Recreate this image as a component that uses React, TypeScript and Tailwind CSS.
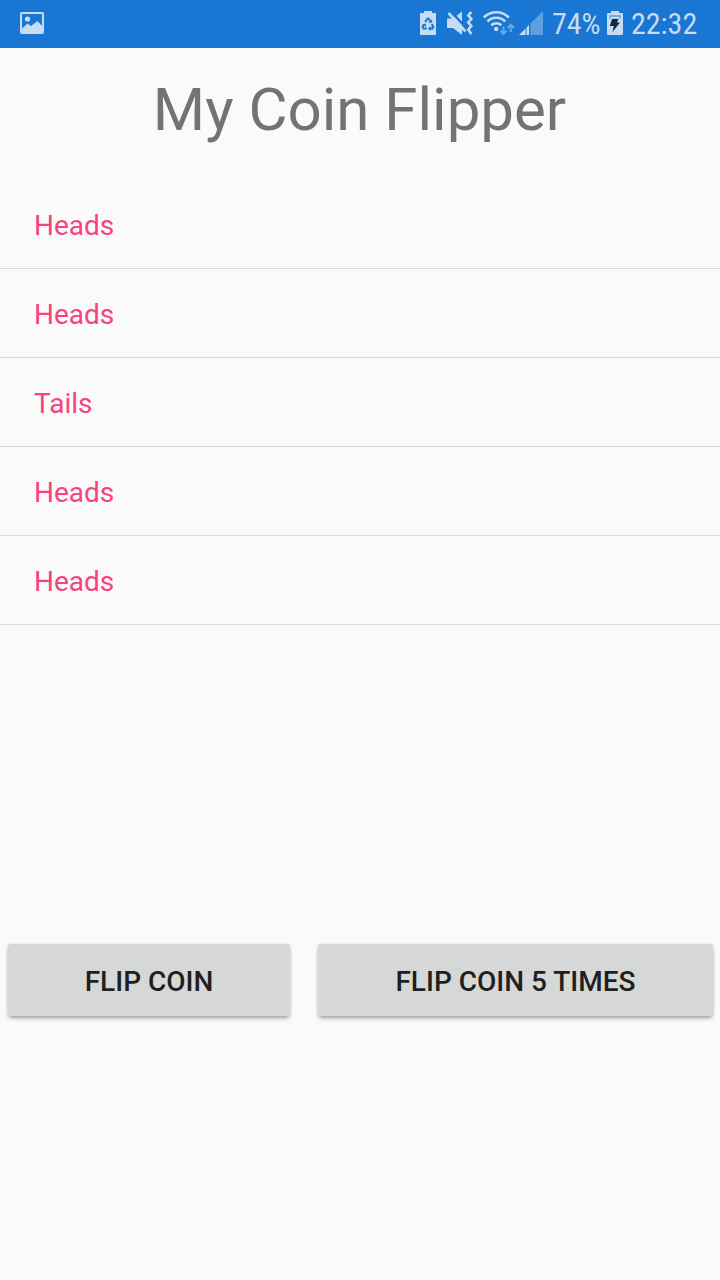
const flips = ["Heads", "Heads", "Tails", "Heads", "Heads"];

function PictureIcon() {
  return (
    <svg className="h-12 w-6" viewBox="20 0 24 48">
      <rect x="21" y="13" width="22" height="20" rx="1" fill="none" stroke="#c5dcf3" strokeWidth="2" />
      <circle cx="27.500" cy="19" r="2.600" fill="#c5dcf3" />
      <path d="M22 28.500l5.500-5 3.500 2.500 6.500-5 4.500 5V33H22z" fill="#c5dcf3" />
    </svg>
  );
}

function RecycleBatteryIcon() {
  return (
    <svg className="h-12 w-4" viewBox="420 0 16 48">
      <path d="M421 13h3v-2h8v2h3q1 0 1 1v20q0 1-1 1h-14q-1 0-1-1v-20q0-1 1-1z" fill="#c5dcf3" />
      <g fill="none" stroke="#1976d2" strokeWidth="2">
        <path d="M425.200 22l2-3.200h1.600l1.500 2.600" />
        <path d="M431.800 24l1.600 2.900-.8 1.500h-2.700" />
        <path d="M426.800 28.400h-3.400l-.8-1.500 1.600-2.700" />
      </g>
      <path d="M428.500 22.400l3.500.3.200-3.300zM430.500 25.900v5l-2.500-2.500zM422.200 24.400l3.300-.9.900 3.200z" fill="#1976d2" />
    </svg>
  );
}

function VibrateMuteIcon() {
  return (
    <svg className="ml-2.5 h-12 w-[27px]" viewBox="446 0 27 48">
      <path d="M447 19.500q0-1 1-1h5l9-7V35l-9-7H448q-1 0-1-1z" fill="#c5dcf3" />
      <path d="M451 11.500l18 19.500" stroke="#1976d2" strokeWidth="2.500" />
      <path d="M448.500 13l17 18.500" stroke="#c5dcf3" strokeWidth="2.600" />
      <path d="M471.300 12l-3 3.500 3 3.500-3 3.500 3 3.500-3 3.500 3 4.500" fill="none" stroke="#c5dcf3" strokeWidth="2.600" />
    </svg>
  );
}

function WifiIcon() {
  return (
    <svg className="ml-2.5 h-12 w-8" viewBox="483 0 32 48">
      <g fill="none" stroke="#c5dcf3" strokeWidth="2.600">
        <path d="M483.800 17.500a17.500 17.500 0 0 1 25 0" />
        <path d="M487.500 21.500a12.300 12.300 0 0 1 17.600 0" />
        <path d="M491.200 25.300a7.300 7.300 0 0 1 10.200 0" />
      </g>
      <circle cx="496.200" cy="29" r="2.200" fill="#c5dcf3" />
      <g fill="none" stroke="#6ba7e2" strokeWidth="2">
        <path d="M503.500 26.500v7M500.500 30.700l3 3.300 3-3.300" />
        <path d="M510.800 32v-7M507.600 28l3.200-3.300 3.200 3.300" />
      </g>
    </svg>
  );
}

function SignalIcon() {
  return (
    <svg className="ml-1 h-12 w-6" viewBox="519 0 24 48">
      <path d="M530.500 23.500L543 11v24h-12.500z" fill="#5e9fdf" />
      <path d="M519 35l6.500-6.500V35zM526.500 27.500l2.500-2.500v10h-2.500z" fill="#c5dcf3" />
    </svg>
  );
}

function ChargingIcon() {
  return (
    <svg className="h-12 w-4" viewBox="607 0 16 48">
      <path d="M608 13h3v-2h8v2h3q1 0 1 1v20q0 1-1 1h-14q-1 0-1-1v-20q0-1 1-1z" fill="#c5dcf3" />
      <path d="M609 15h12v3.500h-12z" fill="#76aee5" />
      <path d="M611 17h8v1.500h-8z" fill="#c5dcf3" />
      <path d="M612 19h6.500l-1.500 3.500h3l-7.500 9.500 1.300-6h-4z" fill="#15293c" />
    </svg>
  );
}

function StatusBar() {
  return (
    <header className="flex h-12 items-center bg-[#1976d2] pl-5">
      <PictureIcon />
      <div className="ml-auto flex w-[300px] items-center">
        <RecycleBatteryIcon />
        <VibrateMuteIcon />
        <WifiIcon />
        <SignalIcon />
        <span className="ml-[9px] w-[55px] whitespace-nowrap text-[30px] leading-[48px] text-[#c5dcf3] [font-family:'Roboto_Condensed',Roboto,sans-serif] [font-stretch:75%]">74%</span>
        <ChargingIcon />
        <span className="ml-2 whitespace-nowrap text-[30px] leading-[48px] text-[#c5dcf3] [font-family:'Roboto_Condensed',Roboto,sans-serif] [font-stretch:75%]">22:32</span>
      </div>
    </header>
  );
}

export default function App() {
  return (
    <div className="flex h-[1280px] w-[720px] flex-col overflow-hidden bg-[#fafafa] [font-family:Roboto,sans-serif]">
      <StatusBar />
      <h1 className="mt-[26px] mr-px h-[106px] text-center text-[60px] leading-[72px] text-[#737373]">My Coin Flipper</h1>
      <ul className="h-[756px]">
        {flips.map((side, i) => (
          <li key={i} className="h-[89px] border-b border-[#d9d9d9] pl-[34px] text-[28px] leading-[92px] text-[#f84280]">
            {side}
          </li>
        ))}
      </ul>
      <div className="mt-2 flex gap-7 pr-[7px] pl-2 text-[28px] font-medium text-[#1f1f1f]">
        <button className="h-[72px] w-[282px] rounded-[3px] bg-[#d6d7d7] pt-1 shadow-[0_3px_4px_-1px_rgba(0,0,0,0.36),0_0_3px_rgba(0,0,0,0.12)]">FLIP COIN</button>
        <button className="h-[72px] w-[395px] rounded-[3px] bg-[#d6d7d7] pt-1 shadow-[0_3px_4px_-1px_rgba(0,0,0,0.36),0_0_3px_rgba(0,0,0,0.12)]">FLIP COIN 5 TIMES</button>
      </div>
    </div>
  );
}
